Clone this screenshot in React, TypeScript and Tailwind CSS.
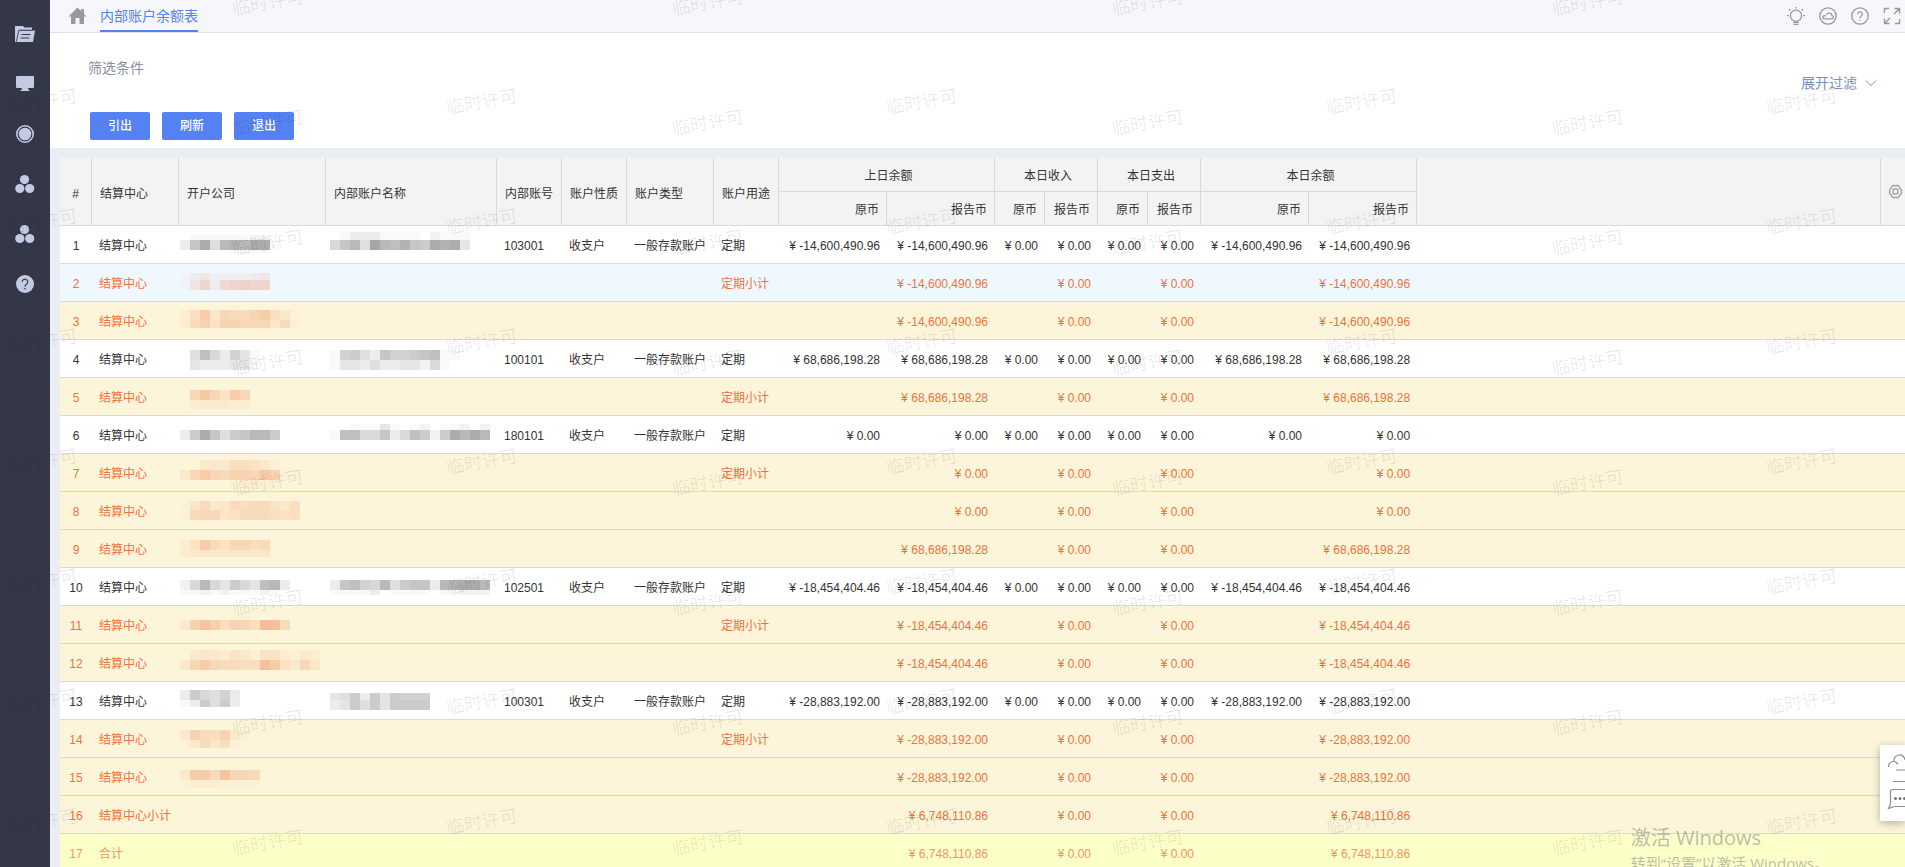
import React from "react";

type Band = [y: number, h: number, levels: string];

type Row = {
  center: string;
  company?: Band[];
  name?: Band[];
  code?: string;
  usage?: string;
  amount: string;
  tone?: "selected" | "subtotal" | "total";
};

const rows: Row[] = [
  {
    center: "结算中心",
    company: [[9, 5, "011111122"], [14, 10, "39d5bcbdd1"], [24, 4, "000001111"]],
    name: [[6, 8, "01333111102111"], [14, 10, "69b5ebac98dcd4"]],
    code: "103001",
    usage: "定期",
    amount: "-14,600,490.96",
  },
  {
    center: "结算中心",
    company: [[9, 7, "135222234"], [16, 10, "159389a99"]],
    usage: "定期小计",
    amount: "-14,600,490.96",
    tone: "selected",
  },
  {
    center: "结算中心",
    company: [[8, 10, "26b48779b641"], [18, 8, "279599888471"]],
    amount: "-14,600,490.96",
    tone: "subtotal",
  },
  {
    center: "结算中心",
    company: [[10, 10, "05a637410"], [20, 10, "04333441"]],
    name: [[10, 10, "1785397789a11"], [20, 10, "1443533442610"]],
    code: "100101",
    usage: "定期",
    amount: "68,686,198.28",
  },
  {
    center: "结算中心",
    company: [[12, 10, "08c85b8"], [22, 9, "0233322"]],
    usage: "定期小计",
    amount: "68,686,198.28",
    tone: "subtotal",
  },
  {
    center: "结算中心",
    company: [[14, 10, "38d9589bb8"]],
    name: [[8, 6, "0011141012011202"], [14, 10, "1aa66936a828dbdb"]],
    code: "180101",
    usage: "定期",
    amount: "0.00",
  },
  {
    center: "结算中心",
    company: [[6, 10, "0033366531"], [16, 10, "38b87998c911"], [26, 9, "0000012211"]],
    usage: "定期小计",
    amount: "0.00",
    tone: "subtotal",
  },
  {
    center: "结算中心",
    company: [[9, 9, "147347677536"], [18, 10, "178845777656"]],
    amount: "0.00",
    tone: "subtotal",
  },
  {
    center: "结算中心",
    company: [[10, 10, "25b758867"], [20, 7, "234334444"]],
    amount: "68,686,198.28",
    tone: "subtotal",
  },
  {
    center: "结算中心",
    company: [[12, 10, "26b64864ab3"], [22, 5, "1121211121"]],
    name: [[12, 10, "39a76b58993bcddb"], [22, 5, "1111301111011222"]],
    code: "102501",
    usage: "定期",
    amount: "-18,454,404.46",
  },
  {
    center: "结算中心",
    company: [[9, 5, "00000110"], [14, 10, "39da6986fe7"]],
    usage: "定期小计",
    amount: "-18,454,404.46",
    tone: "subtotal",
  },
  {
    center: "结算中心",
    company: [[6, 10, "03432531552132"], [16, 10, "38b87766eb5384"]],
    amount: "-18,454,404.46",
    tone: "subtotal",
  },
  {
    center: "结算中心",
    company: [[8, 10, "386573"], [18, 7, "138583"]],
    name: [[11, 7, "4583848777"], [18, 10, "3485848888"]],
    code: "100301",
    usage: "定期",
    amount: "-28,883,192.00",
  },
  {
    center: "结算中心",
    company: [[10, 10, "3976931"], [20, 8, "137461"]],
    usage: "定期小计",
    amount: "-28,883,192.00",
    tone: "subtotal",
  },
  {
    center: "结算中心",
    company: [[12, 10, "3bb7d887"], [22, 8, "12221111"]],
    amount: "-28,883,192.00",
    tone: "subtotal",
  },
  { center: "结算中心小计", amount: "6,748,110.86", tone: "subtotal" },
  { center: "合计", amount: "6,748,110.86", tone: "total" },
];

const rowTone = {
  plain: "bg-white text-[#333333]",
  selected: "bg-[#f0f8ff] text-[#f0713a]",
  subtotal: "bg-[#fdf5da] text-[#f0713a]",
  total: "bg-[#fdffc8] text-[#f29463]",
};

// Redacted text, drawn as 10px blocks. Each hex digit is one block's strength.
function Redacted({ bands, left, tinted }: { bands: Band[]; left: number; tinted: boolean }) {
  const cols = Math.max(...bands.map((b) => b[2].length));
  return (
    <svg className="relative z-20 block" width={left + cols * 10} height="37" shapeRendering="crispEdges" aria-hidden="true">
      {bands.map(([y, h, levels]) =>
        levels.split("").map((level, i) => (
          <rect
            key={`${y}-${i}`}
            x={left + i * 10}
            y={y}
            width="10"
            height={h}
            fill={tinted ? "#e8703c" : "#000000"}
            fillOpacity={parseInt(level, 16) * (tinted ? 0.028 : 0.025)}
          />
        ))
      )}
    </svg>
  );
}

function Watermark() {
  return (
    <div className="pointer-events-none absolute inset-0 z-10 overflow-hidden" aria-hidden="true">
      <div className="grid auto-rows-[120px] grid-cols-[repeat(5,440px)]">
        {Array.from({ length: 40 }, (_, i) => (
          <div key={i} className="relative text-lg leading-6 font-light whitespace-nowrap text-black/13">
            <span className="absolute top-[90px] left-[6px] -rotate-10">临时许可</span>
            <span className="absolute -top-[9px] left-[232px] -rotate-10">临时许可</span>
          </div>
        ))}
      </div>
    </div>
  );
}

function Balls() {
  return (
    <svg width="20" height="20" viewBox="0 0 20 20" fill="currentColor">
      <circle cx="9.500" cy="5.500" r="4.600" />
      <circle cx="4.800" cy="14.500" r="4.600" />
      <circle cx="14.700" cy="14.500" r="4.600" />
    </svg>
  );
}

function Sidebar() {
  const item = "flex h-[50px] w-full items-center justify-center";
  return (
    <nav className="flex w-[50px] shrink-0 flex-col items-center bg-[#343748] pt-[9px] text-[#c3cbe3]">
      <button className={item} aria-label="文件">
        <svg width="20" height="18" viewBox="0 0 20 18">
          <path d="M0 17V1h8l1.500 1.500H17V5H4L1.500 17z" fill="currentColor" />
          <path d="M4 5.500H20L18 17H1.500z" fill="currentColor" />
          <path d="M3.800 5.300 1.400 16.500M3.800 5.200H18" stroke="#343748" strokeWidth=".8" />
          <path d="M6.500 9.500h9M5.500 13h9" stroke="#343748" strokeWidth="1.200" />
        </svg>
      </button>
      <button className={item} aria-label="桌面">
        <svg width="18" height="16" viewBox="0 0 18 16" fill="currentColor">
          <path d="M1 0h16a1 1 0 0 1 1 1v10a1 1 0 0 1-1 1h-5l.5 2h1v1h-9v-1h1L6 12H1a1 1 0 0 1-1-1V1a1 1 0 0 1 1-1z" />
        </svg>
      </button>
      <button className={item} aria-label="应用">
        <svg width="18" height="18" viewBox="0 0 18 18">
          <circle cx="9" cy="9" r="8.200" fill="none" stroke="currentColor" strokeWidth="1.600" />
          <circle cx="9" cy="9" r="6.300" fill="currentColor" />
        </svg>
      </button>
      <button className={item} aria-label="模块一">
        <Balls />
      </button>
      <button className={item} aria-label="模块二">
        <Balls />
      </button>
      <button className={item} aria-label="帮助">
        <svg width="18" height="18" viewBox="0 0 18 18">
          <circle cx="9" cy="9" r="9" fill="currentColor" />
          <path d="M6.200 7a2.800 2.800 0 1 1 4.300 2.300C9.500 10 9 10.500 9 11.800" fill="none" stroke="#343748" strokeWidth="1.100" />
          <circle cx="9" cy="13.800" r=".8" fill="#343748" />
        </svg>
      </button>
    </nav>
  );
}

function TopBar() {
  return (
    <header className="flex h-[33px] shrink-0 items-center border-b border-[#e0e2e5] bg-[#f5f7fa] pl-[18px]">
      <button aria-label="首页">
        <svg width="19" height="18" viewBox="0 0 19 18" fill="#999999">
          <path d="M9.500 0.500 13 4V2h3v5l2.500 2.500H16V17h-4.500v-6h-4v6H3V9.500H0.500z" />
        </svg>
      </button>
      <a href="#" className="ml-[13px] h-8 border-b-2 border-[#5582f3] text-sm leading-8 text-[#5582f3]">
        内部账户余额表
      </a>
      <div className="ml-auto flex items-center gap-[14px] pr-1 text-[#999999]">
        <button aria-label="提示">
          <svg width="18" height="18" viewBox="0 0 18 18" fill="none" stroke="currentColor" strokeWidth="1.300">
            <circle cx="9" cy="8.700" r="5.600" />
            <path d="M6 15.300h6M6.500 17.300h5M9 0v1.500M0 8.700h2M16 8.700h2M2 2l1.500 1.500M16 2l-1.500 1.500" />
          </svg>
        </button>
        <button aria-label="云服务">
          <svg width="18" height="18" viewBox="0 0 18 18" fill="none" stroke="currentColor" strokeWidth="1.300">
            <circle cx="9" cy="9" r="8.200" />
            <path d="M5.200 11.800h7.600a1.600 1.600 0 0 0 .2-3.200 2.900 2.900 0 0 0-5.400-1M5.200 11.800a1.600 1.600 0 1 1 1.600-2.400" />
          </svg>
        </button>
        <button aria-label="帮助">
          <svg width="18" height="18" viewBox="0 0 18 18" fill="none" stroke="currentColor" strokeWidth="1.300">
            <circle cx="9" cy="9" r="8.200" />
            <path d="M6.700 7a2.300 2.300 0 1 1 3.500 2C9.300 9.600 9 10 9 11.200M9 12.700v1.300" />
          </svg>
        </button>
        <button aria-label="全屏">
          <svg width="18" height="18" viewBox="0 0 18 18" fill="none" stroke="currentColor" strokeWidth="1.400">
            <path d="M1.500 6V1.500H6M12 16.500h4.500V12M11.500 1.500h5V6.500M6.500 16.500h-5V11.500M16.500 1.500 11 7M1.500 16.500 7 11" />
          </svg>
        </button>
      </div>
    </header>
  );
}

function FilterPanel() {
  const button = "h-7 w-[60px] rounded-xs bg-[#5582f3] text-xs font-medium text-white";
  return (
    <section className="flex h-[115px] shrink-0 flex-col bg-white pr-7 pl-10">
      <h2 className="-ml-[2px] pt-[25px] text-sm leading-5 text-[#8b90a0]">筛选条件</h2>
      <button className="-mt-[5px] flex items-center gap-2 self-end text-sm leading-5 text-[#7b8fc4]">
        展开过滤
        <svg width="12" height="6" viewBox="0 0 12 6" fill="none" stroke="currentColor">
          <path d="M1 .5 6 5.500 11 .5" />
        </svg>
      </button>
      <div className="mt-[19px] flex gap-3">
        <button className={button}>引出</button>
        <button className={button}>刷新</button>
        <button className={button}>退出</button>
      </div>
    </section>
  );
}

function BalanceTable() {
  const th = "border-r border-b border-[#d9d9d9] font-normal";
  const money = "pt-[2px] pr-[7px] text-right whitespace-pre";
  const text = "pt-[2px] pl-[7px] whitespace-nowrap";
  return (
    <table className="w-full table-fixed border-separate border-spacing-0 text-xs">
      <colgroup>
        <col className="w-8" />
        <col className="w-[87px]" />
        <col className="w-[147px]" />
        <col className="w-[171px]" />
        <col className="w-[65px]" />
        <col className="w-[65px]" />
        <col className="w-[87px]" />
        <col className="w-[65px]" />
        <col className="w-[108px]" />
        <col className="w-[108px]" />
        <col className="w-[50px]" />
        <col className="w-[53px]" />
        <col className="w-[50px]" />
        <col className="w-[53px]" />
        <col className="w-[108px]" />
        <col className="w-[108px]" />
        <col />
        <col className="w-6" />
      </colgroup>
      <thead className="bg-[#f3f3f3] text-[#333333]">
        <tr className="h-[34px]">
          <th rowSpan={2} className={`${th} pt-1`}>#</th>
          {["结算中心", "开户公司", "内部账户名称", "内部账号", "账户性质", "账户类型", "账户用途"].map((t) => (
            <th key={t} rowSpan={2} className={`${th} pt-1 pl-2 text-left whitespace-nowrap`}>
              {t}
            </th>
          ))}
          {["上日余额", "本日收入", "本日支出", "本日余额"].map((t) => (
            <th key={t} colSpan={2} className={`${th} pt-[2px] pl-1`}>
              {t}
            </th>
          ))}
          <th rowSpan={2} className={th}></th>
          <th rowSpan={2} className="border-b border-[#d9d9d9] p-0">
            <button className="ml-[7px] block" aria-label="列设置">
              <svg width="15" height="15" viewBox="0 0 15 15" fill="none" stroke="#999999" strokeWidth="1.200" strokeLinejoin="round">
                <path d="M5.500 1.300h.8a1.500 1.500 0 0 0 2.400 0h.8l1.700 1a1.500 1.500 0 0 0 1.300 2.100l1.200 2.100a1.500 1.500 0 0 0 0 2.200l-1.200 2a1.500 1.500 0 0 0-1.300 2.100l-1.700 1h-.8a1.500 1.500 0 0 0-2.400 0h-.8l-1.700-1a1.500 1.500 0 0 0-1.300-2.100l-1.200-2a1.500 1.500 0 0 0 0-2.200l1.200-2.100a1.500 1.500 0 0 0 1.300-2.100z" />
                <circle cx="7.500" cy="7.500" r="2.600" />
              </svg>
            </button>
          </th>
        </tr>
        <tr className="h-[34px]">
          {[0, 1, 2, 3].map((i) => (
            <React.Fragment key={i}>
              <th className={`${th} pt-[3px] pr-[7px] text-right`}>原币</th>
              <th className={`${th} pt-[3px] pr-[7px] text-right`}>报告币</th>
            </React.Fragment>
          ))}
        </tr>
      </thead>
      <tbody>
        {rows.map((row, i) => {
          const sum = `¥ ${row.amount}`;
          const zero = "¥ 0.00";
          const tinted = Boolean(row.tone);
          return (
            <tr key={i} className={`h-[38px] *:border-b *:border-[#d9d9d9] ${rowTone[row.tone ?? "plain"]}`}>
              <td className="pt-[2px] text-center">{i + 1}</td>
              <td className={text}>{row.center}</td>
              <td className="p-0">{row.company && <Redacted bands={row.company} left={1} tinted={tinted} />}</td>
              <td className="p-0">{row.name && <Redacted bands={row.name} left={4} tinted={tinted} />}</td>
              <td className={text}>{row.code}</td>
              <td className={text}>{row.code && "收支户"}</td>
              <td className={text}>{row.code && "一般存款账户"}</td>
              <td className={text}>{row.usage}</td>
              <td className={money}>{row.code && sum}</td>
              <td className={money}>{sum}</td>
              <td className={money}>{row.code && zero}</td>
              <td className={money}>{zero}</td>
              <td className={money}>{row.code && zero}</td>
              <td className={money}>{zero}</td>
              <td className={money}>{row.code && sum}</td>
              <td className={money}>{sum}</td>
              <td colSpan={2}></td>
            </tr>
          );
        })}
      </tbody>
    </table>
  );
}

function FloatingTools() {
  return (
    <div className="absolute right-0 bottom-[46px] z-30 h-[76px] w-[25px] overflow-hidden rounded-l-xs bg-white shadow-[0_2px_8px_rgba(0,0,0,0.3)]">
      <svg width="25" height="76" viewBox="0 0 25 76" fill="none" stroke="#8c8c8c" strokeWidth="1.200">
        <path d="M8.500 22a5 5 0 0 1 5-5.500c2 0 3.500 1 4.300 3M14 16a5.500 5.500 0 0 1 11-1M16 25h9M13 36.500h12" />
        <path d="M25 44.500H12.500a2 2 0 0 0-2 2V59L8.500 63.500 14 61.500H25" />
        <g fill="#777777" stroke="none">
          <circle cx="15.500" cy="53.500" r="1.500" />
          <circle cx="20" cy="53.500" r="1.500" />
          <circle cx="24.500" cy="53.500" r="1.500" />
        </g>
      </svg>
    </div>
  );
}

export default function App() {
  return (
    <div className="relative flex h-screen overflow-hidden bg-[#eaeef4] font-['Liberation_Sans','Noto_Sans_CJK_SC',sans-serif]">
      <Sidebar />
      <main className="flex min-w-0 flex-1 flex-col">
        <TopBar />
        <FilterPanel />
        <div className="min-h-0 flex-1 overflow-hidden pt-[10px] pl-[10px]">
          <BalanceTable />
        </div>
      </main>
      <Watermark />
      <div className="pointer-events-none absolute right-[76px] -bottom-[7px] z-20 font-['Open_Sans','Noto_Sans_CJK_SC',sans-serif] whitespace-nowrap text-[#8f8f8f]/60">
        <p className="text-xl leading-7">激活 Windows</p>
        <p className="text-[15px] leading-[22px]">转到“设置”以激活 Windows。</p>
      </div>
      <FloatingTools />
    </div>
  );
}
